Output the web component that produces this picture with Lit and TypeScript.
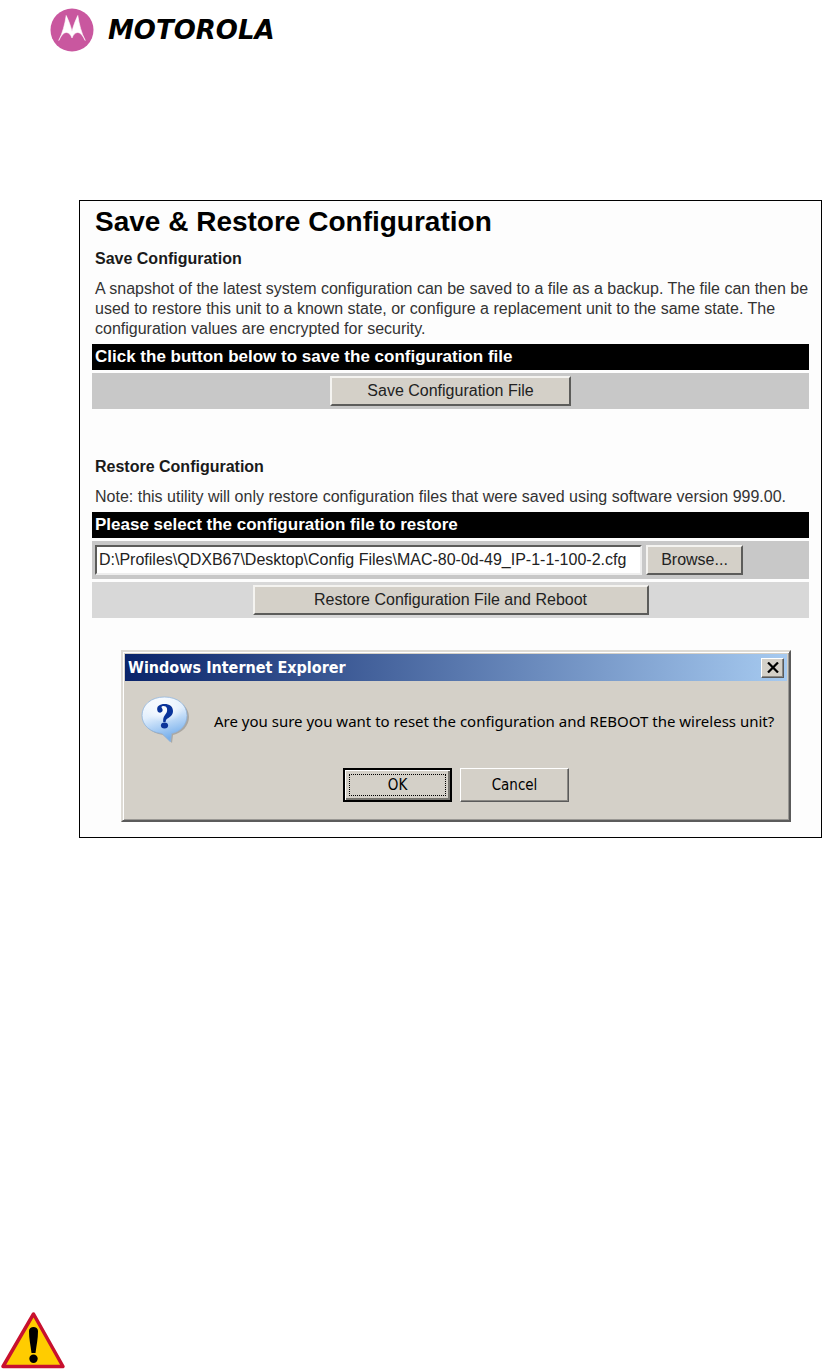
import { LitElement, html, css } from "lit";
import { customElement, property } from "lit/decorators.js";

@customElement("confirm-dialog")
class ConfirmDialog extends LitElement {
  @property() heading = "";
  @property() message = "";

  static styles = css`
    :host {
      display: block;
      font-family: "DejaVu Sans Condensed", "DejaVu Sans", Tahoma, sans-serif;
      color: #000;
    }
    .window {
      background: #d4d0c8;
      border: 2px solid;
      border-color: #dedbd5 #5a5a5a #5a5a5a #dedbd5;
      box-shadow: inset 1px 1px #fff, inset -1px -1px #9a9894;
      padding: 2px;
    }
    .title {
      display: flex;
      align-items: center;
      justify-content: space-between;
      height: 27px;
      padding: 0 3px;
      background: linear-gradient(90deg, #0a246a, #a6caf0);
    }
    .title h2 {
      margin: 0;
      font-size: 16px;
      line-height: 20px;
      color: #fff;
    }
    button {
      font: inherit;
      font-size: 15px;
      color: #000;
      background: #d4d0c8;
      border: 1px solid;
      border-color: #fff #5a5a5a #5a5a5a #fff;
      box-shadow: inset -1px -1px #8a8884;
      padding: 0;
      border-radius: 0;
      box-sizing: border-box;
    }
    .close {
      display: grid;
      place-items: center;
      width: 23px;
      height: 20px;
    }
    .message {
      display: flex;
      align-items: center;
      gap: 24px;
      padding: 15px 12px 0 15px;
    }
    .bubble {
      flex: none;
      display: block;
    }
    p {
      margin: 0;
      font-family: "Noto Sans", Tahoma, sans-serif;
      font-size: 15px;
      line-height: 20px;
      white-space: nowrap;
    }
    .actions {
      display: flex;
      justify-content: center;
      gap: 8px;
      padding: 22px 0 16px;
    }
    .actions button {
      width: 109px;
      height: 34px;
    }
    .actions .default {
      display: flex;
      padding: 3px;
      border: 2px solid #000;
      box-shadow: inset 1px 1px #fff, inset -2px -2px #77756f;
    }
    .focus {
      flex: 1;
      display: grid;
      place-items: center;
      border: 1px dotted #000;
      margin: 1px;
    }
  `;

  render() {
    return html`
      <section class="window" role="dialog" aria-label=${this.heading}>
        <div class="title">
          <h2>${this.heading}</h2>
          <button class="close" aria-label="Close">
            <svg width="12" height="11" viewBox="0 0 12 11">
              <path d="M1 0.5 L11 10.5 M11 0.5 L1 10.5" stroke="#000" stroke-width="2.2" />
            </svg>
          </button>
        </div>
        <div class="message">
          <svg class="bubble" width="50" height="50" viewBox="0 0 50 50" aria-hidden="true">
            <defs>
              <linearGradient id="face" x1="0" y1="0" x2="0.3" y2="1">
                <stop offset="0" stop-color="#fff" />
                <stop offset="0.45" stop-color="#e2effd" />
                <stop offset="1" stop-color="#78b0ec" />
              </linearGradient>
              <radialGradient id="glow">
                <stop offset="0" stop-color="#fff" stop-opacity="0.9" />
                <stop offset="1" stop-color="#fff" stop-opacity="0" />
              </radialGradient>
            </defs>
            <path d="M26 3 C40 3 49 11 49 21 C49 30 42 37 33 39 L32 47 L23 39 C11 37 4 31 4 21 C4 11 13 3 26 3Z" fill="#8e8c88" opacity="0.6" />
            <path d="M24.500 1 C38 1 47 9 47 19.500 C47 29 40 36 31.500 37.500 L30.500 46 L22 37.500 C10 36.500 2 29 2 19.500 C2 9 11 1 24.500 1Z" fill="url(#face)" stroke="#8fb4dc" stroke-width="0.8" />
            <ellipse cx="24" cy="14" rx="19" ry="12" fill="url(#glow)" />
            <path d="M17.500 15 C16 10 20 8 24.500 8 C29.500 8 33 10.500 33 15 C33 19 30 21 27.500 22.500 C26 23.500 25.800 24.500 25.600 26 L23.200 26 C23 22.500 23.500 21 25 19 C26.500 17 27.500 15.500 27 12.500 C26.500 9.500 22 9.300 21.500 11 C21.300 12 23 12.600 22.600 14.600 C22 17.200 18.300 17.300 17.500 15Z" fill="#0a349a" />
            <ellipse cx="24.500" cy="29.500" rx="3.600" ry="3" fill="#0a349a" />
          </svg>
          <p>${this.message}</p>
        </div>
        <div class="actions">
          <button class="default"><span class="focus">OK</span></button>
          <button>Cancel</button>
        </div>
      </section>
    `;
  }
}

@customElement("app-root")
class AppRoot extends LitElement {
  static styles = css`
    :host {
      display: block;
      font-family: "Liberation Sans", Arial, sans-serif;
      color: #000;
    }
    .page {
      display: flex;
      flex-direction: column;
      min-height: 100vh;
      background: #fff;
    }
    .brand {
      display: flex;
      align-items: center;
      gap: 14px;
      padding: 8px 0 0 50px;
      font: italic bold 26px/44px "DejaVu Sans", Verdana, sans-serif;
    }
    .brand svg,
    .warning {
      display: block;
    }
    .shot {
      margin: 148px 0 0 79px;
      padding: 4px 12px 15px;
      border: 1px solid #000;
      background: #fdfdfd;
    }
    h1 {
      margin: 0;
      padding-left: 3px;
      font-size: 28px;
      line-height: 34px;
    }
    h2 {
      margin: 10px 0 0;
      padding-left: 3px;
      font-size: 16px;
      line-height: 20px;
      color: #1a1a1a;
    }
    .note {
      margin: 10px 0 5px;
      padding-left: 3px;
      font-size: 16px;
      line-height: 20px;
      color: #333;
    }
    .restore {
      margin-top: 48px;
    }
    .bar {
      margin: 0;
      padding: 0 3px;
      background: #000;
      color: #fff;
      font-size: 17px;
      font-weight: bold;
      line-height: 26px;
    }
    .row {
      display: flex;
      align-items: center;
      justify-content: center;
      margin-top: 3px;
      padding: 3px;
      background: #c8c8c8;
    }
    .file {
      justify-content: flex-start;
      gap: 4px;
      padding: 4px 3px;
    }
    .light {
      background: #d8d8d8;
    }
    button,
    input {
      box-sizing: border-box;
      height: 30px;
      margin: 0;
      font: inherit;
      font-size: 16px;
      border-radius: 0;
      color: #222;
    }
    button {
      padding: 0;
      background: #d4d0c8;
      border: 2px solid;
      border-color: #f4f3f0 #5c5c5a #5c5c5a #f4f3f0;
    }
    input {
      width: 547px;
      padding: 0 2px;
      background: #fff;
      border: 2px solid;
      border-color: #5c5c5a #eee #eee #5c5c5a;
    }
    .save-button {
      width: 241px;
    }
    .browse-button {
      width: 97px;
    }
    .restore-button {
      width: 396px;
    }
    confirm-dialog {
      margin: 32px 18px 0 29px;
    }
    .warning {
      margin-top: auto;
    }
  `;

  render() {
    return html`
      <div class="page">
        <header class="brand">
          <svg width="44" height="44" viewBox="0 0 44 44" aria-hidden="true">
            <circle cx="22" cy="22" r="21.500" fill="#c9579f" />
            <path
              d="M8.800 32.500 C12.500 25 15 16 16.200 7.500 C18.500 12.500 20.800 18 22 23.500 C23.200 18 25.500 12.500 27.800 7.500 C29 16 31.500 25 35.200 32.500 C33 28 30.500 24.500 27.500 24.500 C25 24.500 23.200 26.800 22 30 C20.800 26.800 19 24.500 16.500 24.500 C13.500 24.500 11 28 8.800 32.500Z"
              fill="#fff"
              stroke="#fff"
              stroke-width="0.600"
            />
          </svg>
          <span>MOTOROLA</span>
        </header>
        <main class="shot">
          <h1>Save &amp; Restore Configuration</h1>
          <section>
            <h2>Save Configuration</h2>
            <p class="note">
              A snapshot of the latest system configuration can be saved to a file as a backup. The file can then be
              used to restore this unit to a known state, or configure a replacement unit to the same state. The
              configuration values are encrypted for security.
            </p>
            <p class="bar">Click the button below to save the configuration file</p>
            <div class="row"><button class="save-button">Save Configuration File</button></div>
          </section>
          <section class="restore">
            <h2>Restore Configuration</h2>
            <p class="note">
              Note: this utility will only restore configuration files that were saved using software version 999.00.
            </p>
            <p class="bar"><label for="config-file">Please select the configuration file to restore</label></p>
            <div class="row file">
              <input
                id="config-file"
                type="text"
                .value=${"D:\\Profiles\\QDXB67\\Desktop\\Config Files\\MAC-80-0d-49_IP-1-1-100-2.cfg"}
              />
              <button class="browse-button">Browse...</button>
            </div>
            <div class="row light"><button class="restore-button">Restore Configuration File and Reboot</button></div>
          </section>
          <confirm-dialog
            heading="Windows Internet Explorer"
            message="Are you sure you want to reset the configuration and REBOOT the wireless unit?"
          ></confirm-dialog>
        </main>
        <svg class="warning" width="66" height="58" viewBox="0 0 66 58" role="img" aria-label="Warning">
          <path d="M33.500 3 L63 55.500 L3 55.500 Z" fill="#ffcc00" stroke="#c8102e" stroke-width="3.500" stroke-linejoin="round" />
          <path d="M29 20 C29 14.500 38 14.500 38 20 C38 28 36.500 34 35.500 42 L31.500 42 C30.500 34 29 28 29 20Z" fill="#000" />
          <circle cx="33.500" cy="47.800" r="4.200" fill="#000" />
        </svg>
      </div>
    `;
  }
}
